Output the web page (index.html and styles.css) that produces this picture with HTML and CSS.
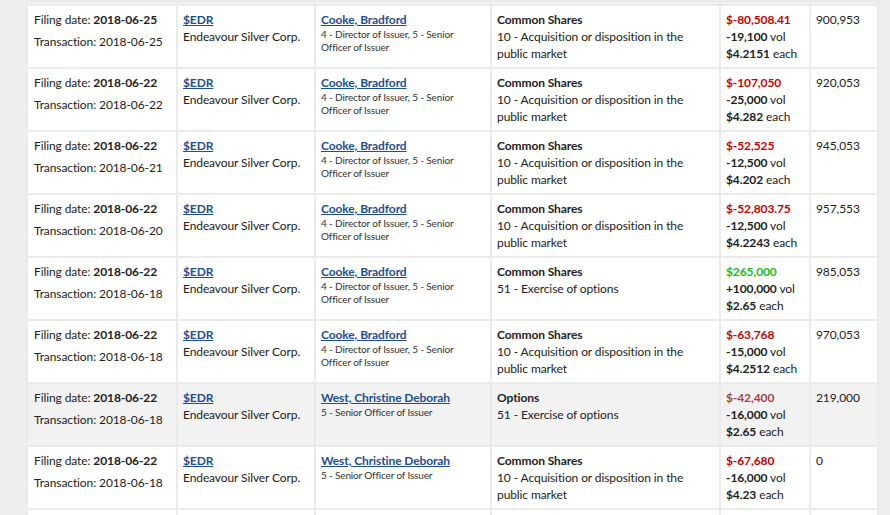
FILE: index.html
```html
<!DOCTYPE html>
<html>
<head>
<meta charset="utf-8">
<link rel="stylesheet" href="styles.css">
</head>
<body>
<table class="trades">
  <colgroup>
    <col class="c-date"><col class="c-sym"><col class="c-ins"><col class="c-sec"><col class="c-amt"><col class="c-hold">
  </colgroup>
  <tr class="tail"><td></td><td></td><td></td><td></td><td></td><td></td></tr>
  <tr>
    <td><div class="d1">Filing date: <b>2018-06-25</b></div><div>Transaction: 2018-06-25</div></td>
    <td><a href="#" class="lnk">$EDR</a><div>Endeavour Silver Corp.</div></td>
    <td><a href="#" class="lnk">Cooke, Bradford</a><div class="rel">4 - Director of Issuer, 5 - Senior Officer of Issuer</div></td>
    <td><b>Common Shares</b><div>10 - Acquisition or disposition in the public market</div></td>
    <td><div class="neg">$-80,508.41</div><div><b>-19,100</b> vol</div><div><b>$4.2151</b> each</div></td>
    <td>900,953</td>
  </tr>
  <tr>
    <td><div class="d1">Filing date: <b>2018-06-22</b></div><div>Transaction: 2018-06-22</div></td>
    <td><a href="#" class="lnk">$EDR</a><div>Endeavour Silver Corp.</div></td>
    <td><a href="#" class="lnk">Cooke, Bradford</a><div class="rel">4 - Director of Issuer, 5 - Senior Officer of Issuer</div></td>
    <td><b>Common Shares</b><div>10 - Acquisition or disposition in the public market</div></td>
    <td><div class="neg">$-107,050</div><div><b>-25,000</b> vol</div><div><b>$4.282</b> each</div></td>
    <td>920,053</td>
  </tr>
  <tr>
    <td><div class="d1">Filing date: <b>2018-06-22</b></div><div>Transaction: 2018-06-21</div></td>
    <td><a href="#" class="lnk">$EDR</a><div>Endeavour Silver Corp.</div></td>
    <td><a href="#" class="lnk">Cooke, Bradford</a><div class="rel">4 - Director of Issuer, 5 - Senior Officer of Issuer</div></td>
    <td><b>Common Shares</b><div>10 - Acquisition or disposition in the public market</div></td>
    <td><div class="neg">$-52,525</div><div><b>-12,500</b> vol</div><div><b>$4.202</b> each</div></td>
    <td>945,053</td>
  </tr>
  <tr>
    <td><div class="d1">Filing date: <b>2018-06-22</b></div><div>Transaction: 2018-06-20</div></td>
    <td><a href="#" class="lnk">$EDR</a><div>Endeavour Silver Corp.</div></td>
    <td><a href="#" class="lnk">Cooke, Bradford</a><div class="rel">4 - Director of Issuer, 5 - Senior Officer of Issuer</div></td>
    <td><b>Common Shares</b><div>10 - Acquisition or disposition in the public market</div></td>
    <td><div class="neg">$-52,803.75</div><div><b>-12,500</b> vol</div><div><b>$4.2243</b> each</div></td>
    <td>957,553</td>
  </tr>
  <tr>
    <td><div class="d1">Filing date: <b>2018-06-22</b></div><div>Transaction: 2018-06-18</div></td>
    <td><a href="#" class="lnk">$EDR</a><div>Endeavour Silver Corp.</div></td>
    <td><a href="#" class="lnk">Cooke, Bradford</a><div class="rel">4 - Director of Issuer, 5 - Senior Officer of Issuer</div></td>
    <td><b>Common Shares</b><div>51 - Exercise of options</div></td>
    <td><div class="pos">$265,000</div><div><b>+100,000</b> vol</div><div><b>$2.65</b> each</div></td>
    <td>985,053</td>
  </tr>
  <tr>
    <td><div class="d1">Filing date: <b>2018-06-22</b></div><div>Transaction: 2018-06-18</div></td>
    <td><a href="#" class="lnk">$EDR</a><div>Endeavour Silver Corp.</div></td>
    <td><a href="#" class="lnk">Cooke, Bradford</a><div class="rel">4 - Director of Issuer, 5 - Senior Officer of Issuer</div></td>
    <td><b>Common Shares</b><div>10 - Acquisition or disposition in the public market</div></td>
    <td><div class="neg">$-63,768</div><div><b>-15,000</b> vol</div><div><b>$4.2512</b> each</div></td>
    <td>970,053</td>
  </tr>
  <tr class="muted">
    <td><div class="d1">Filing date: <b>2018-06-22</b></div><div>Transaction: 2018-06-18</div></td>
    <td><a href="#" class="lnk">$EDR</a><div>Endeavour Silver Corp.</div></td>
    <td><a href="#" class="lnk">West, Christine Deborah</a><div class="rel">5 - Senior Officer of Issuer</div></td>
    <td><b>Options</b><div>51 - Exercise of options</div></td>
    <td><div class="neg">$-42,400</div><div><b>-16,000</b> vol</div><div><b>$2.65</b> each</div></td>
    <td>219,000</td>
  </tr>
  <tr>
    <td><div class="d1">Filing date: <b>2018-06-22</b></div><div>Transaction: 2018-06-18</div></td>
    <td><a href="#" class="lnk">$EDR</a><div>Endeavour Silver Corp.</div></td>
    <td><a href="#" class="lnk">West, Christine Deborah</a><div class="rel">5 - Senior Officer of Issuer</div></td>
    <td><b>Common Shares</b><div>10 - Acquisition or disposition in the public market</div></td>
    <td><div class="neg">$-67,680</div><div><b>-16,000</b> vol</div><div><b>$4.23</b> each</div></td>
    <td>0</td>
  </tr>
  <tr>
    <td>&nbsp;</td><td></td><td></td><td></td><td></td><td></td>
  </tr>
</table>
</body>
</html>
```
FILE: styles.css
```css
html, body {
  margin: 0;
  padding: 0;
  background: #eeeeee;
}
body {
  padding-left: 26px;
  font-family: Lato, "Open Sans", sans-serif;
  font-size: 12px;
  letter-spacing: -0.1px;
  line-height: 17px;
  color: #222;
  overflow: hidden;
  height: 515px;
}
.trades {
  table-layout: fixed;
  width: 853px;
  border-collapse: separate;
  border-spacing: 2px;
  background: #ebebeb;
}
.c-date { width: 148px; }
.c-sym { width: 136px; }
.c-ins { width: 174px; }
.c-sec { width: 227px; }
.c-amt { width: 88px; }
.c-hold { width: 66px; }
.trades td {
  background: #fff;
  vertical-align: top;
  padding: 5px 5px 5px 5px;
}
.trades td:first-child { padding-left: 6px; }
.trades tr.tail td {
  background: #f2f2f2;
  padding: 0;
  height: 2px;
  line-height: 0;
  font-size: 0;
}
.trades tr.muted td { background: #f2f2f2; }
.d1 { margin-bottom: 5px; }
b { font-weight: 700; }
.lnk {
  color: #1d4f94;
  font-weight: 700;
  text-decoration: underline;
}
.rel {
  font-size: 10px;
  letter-spacing: -0.15px;
  line-height: 13px;
  color: #333;
  max-width: 150px;
}
.neg { color: #cc0000; font-weight: 700; }
.pos { color: #22bb22; font-weight: 700; }
.muted .neg { color: #a04444; }
```
